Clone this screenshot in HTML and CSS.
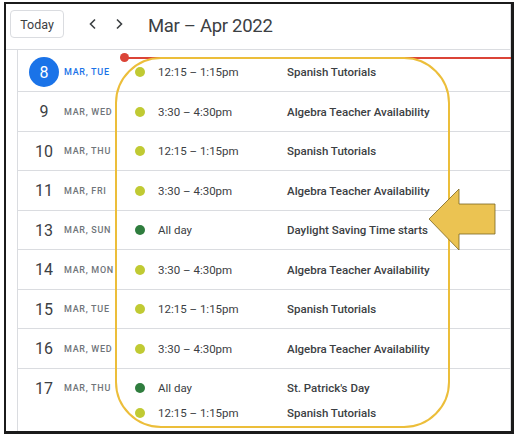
FILE: index.html
```html
<!DOCTYPE html>
<html>
<head>
<meta charset="utf-8">
<link rel="stylesheet" href="styles.css">
</head>
<body>
<div class="frame">
  <header class="toolbar">
    <button class="today">Today</button>
    <div class="nav">
      <span class="chev"><svg width="10" height="12" viewBox="0 0 10 12"><path d="M7 1.5 L2.5 6 L7 10.5" fill="none" stroke="#3c4043" stroke-width="1.6"/></svg></span>
      <span class="chev"><svg width="10" height="12" viewBox="0 0 10 12"><path d="M3 1.5 L7.5 6 L3 10.5" fill="none" stroke="#3c4043" stroke-width="1.6"/></svg></span>
    </div>
    <h1 class="title">Mar – Apr 2022</h1>
  </header>
  <div class="main">
    <div class="gutter"></div>
    <div class="list">
      <div class="row first">
        <div class="date"><span class="num today-num">8</span><span class="dow blue">Mar, Tue</span></div>
        <div class="events">
          <div class="event"><span class="dot lime"></span><span class="time">12:15 – 1:15pm</span><span class="name">Spanish Tutorials</span></div>
        </div>
      </div>
      <div class="row">
        <div class="date"><span class="num">9</span><span class="dow">Mar, Wed</span></div>
        <div class="events">
          <div class="event"><span class="dot lime"></span><span class="time">3:30 – 4:30pm</span><span class="name">Algebra Teacher Availability</span></div>
        </div>
      </div>
      <div class="row">
        <div class="date"><span class="num">10</span><span class="dow">Mar, Thu</span></div>
        <div class="events">
          <div class="event"><span class="dot lime"></span><span class="time">12:15 – 1:15pm</span><span class="name">Spanish Tutorials</span></div>
        </div>
      </div>
      <div class="row">
        <div class="date"><span class="num">11</span><span class="dow">Mar, Fri</span></div>
        <div class="events">
          <div class="event"><span class="dot lime"></span><span class="time">3:30 – 4:30pm</span><span class="name">Algebra Teacher Availability</span></div>
        </div>
      </div>
      <div class="row">
        <div class="date"><span class="num">13</span><span class="dow">Mar, Sun</span></div>
        <div class="events">
          <div class="event"><span class="dot green"></span><span class="time">All day</span><span class="name">Daylight Saving Time starts</span></div>
        </div>
      </div>
      <div class="row">
        <div class="date"><span class="num">14</span><span class="dow">Mar, Mon</span></div>
        <div class="events">
          <div class="event"><span class="dot lime"></span><span class="time">3:30 – 4:30pm</span><span class="name">Algebra Teacher Availability</span></div>
        </div>
      </div>
      <div class="row">
        <div class="date"><span class="num">15</span><span class="dow">Mar, Tue</span></div>
        <div class="events">
          <div class="event"><span class="dot lime"></span><span class="time">12:15 – 1:15pm</span><span class="name">Spanish Tutorials</span></div>
        </div>
      </div>
      <div class="row">
        <div class="date"><span class="num">16</span><span class="dow">Mar, Wed</span></div>
        <div class="events">
          <div class="event"><span class="dot lime"></span><span class="time">3:30 – 4:30pm</span><span class="name">Algebra Teacher Availability</span></div>
        </div>
      </div>
      <div class="row">
        <div class="date"><span class="num">17</span><span class="dow">Mar, Thu</span></div>
        <div class="events">
          <div class="event"><span class="dot green"></span><span class="time">All day</span><span class="name">St. Patrick's Day</span></div>
          <div class="event"><span class="dot lime"></span><span class="time">12:15 – 1:15pm</span><span class="name">Spanish Tutorials</span></div>
        </div>
      </div>
    </div>
  </div>
  <div class="now-line"></div>
  <div class="now-dot"></div>
  <div class="highlight"></div>
  <svg class="arrow" width="70" height="64" viewBox="0 0 70 64">
    <polygon points="1,31 31,1 31,16 67,16 67,46 31,46 31,62" fill="#ebc352" stroke="#7a6422" stroke-width="0.8"/>
  </svg>
</div>
</body>
</html>
```
FILE: styles.css
```css
* { box-sizing: border-box; }
html, body { margin: 0; padding: 0; background: #fff; }
body { font-family: Roboto, "Liberation Sans", Arial, sans-serif; color: #3c4043; }

.frame {
  position: relative;
  margin: 2px 0 0 4px;
  width: 510px;
  height: 432px;
  border-left: 2px solid #1b1b1b;
  border-top: 2px solid #1b1b1b;
  border-right: 3px solid #1b1b1b;
  border-bottom: 3px solid #1b1b1b;
  overflow: hidden;
  display: flex;
  flex-direction: column;
}

.toolbar {
  height: 46px;
  flex: none;
  border-bottom: 1px solid #dadce0;
  border-right: 1px solid #dadce0;
  display: flex;
  align-items: flex-start;
}
.today {
  margin: 6px 0 0 4px;
  width: 54px;
  height: 28px;
  border: 1px solid #dadce0;
  border-radius: 4px;
  background: #fff;
  font-family: Roboto, "Liberation Sans", Arial, sans-serif;
  font-size: 12.5px;
  font-weight: 400;
  color: #3c4043;
  padding: 0;
}
.nav { display: flex; margin: 13px 0 0 16px; }
.chev { width: 26px; height: 14px; display: flex; align-items: center; justify-content: center; }
.title {
  margin: 9px 0 0 16px;
  font-size: 18.5px;
  letter-spacing: -0.3px;
  font-weight: 400;
  line-height: 26px;
  color: #3c4043;
}

.main { flex: 1; display: flex; min-height: 0; }
.gutter { width: 11px; flex: none; }
.list {
  flex: 1;
  border-left: 1px solid #dadce0;
  border-right: 1px solid #dadce0;
}
.row {
  height: 39.5px;
  border-bottom: 1px solid #dadce0;
  display: flex;
  align-items: flex-start;
  padding-top: 7px;
}
.row.first { height: 42px; padding-top: 9.5px; }
.row:last-child { height: 70px; border-bottom: none; }

.date {
  width: 117px;
  flex: none;
  height: 25px;
  display: flex;
  align-items: center;
  padding-left: 11px;
}
.num {
  width: 30px;
  height: 30px;
  flex: none;
  display: flex;
  align-items: center;
  justify-content: center;
  font-size: 16px;
  color: #3c4043;
}
.today-num { background: #1a73e8; color: #fff; border-radius: 50%; }
.dow {
  margin-left: 5px;
  font-size: 9px;
  font-weight: 500;
  letter-spacing: 0.7px;
  text-transform: uppercase;
  color: #70757a;
}
.dow.blue { color: #1a73e8; }

.events { display: flex; flex-direction: column; }
.event { height: 25px; display: flex; align-items: center; }
.dot { width: 10px; height: 10px; border-radius: 50%; margin-right: 13px; flex: none; }
.dot.lime { background: #c0ca33; }
.dot.green { background: #2f7d3e; }
.time { width: 129px; font-size: 11.5px; color: #3c4043; }
.name { font-size: 11.5px; font-weight: 500; color: #3c4043; white-space: nowrap; }

.now-line {
  position: absolute;
  left: 118px;
  top: 53px;
  width: 390px;
  height: 2px;
  background: #db4437;
}
.now-dot {
  position: absolute;
  left: 114px;
  top: 49px;
  width: 9px;
  height: 9px;
  border-radius: 50%;
  background: #db4437;
}
.highlight {
  position: absolute;
  left: 109px;
  top: 53px;
  width: 335px;
  height: 371px;
  border: 2px solid #ecbe3a;
  border-radius: 46px;
}
.arrow { position: absolute; left: 422px; top: 184px; }
```
